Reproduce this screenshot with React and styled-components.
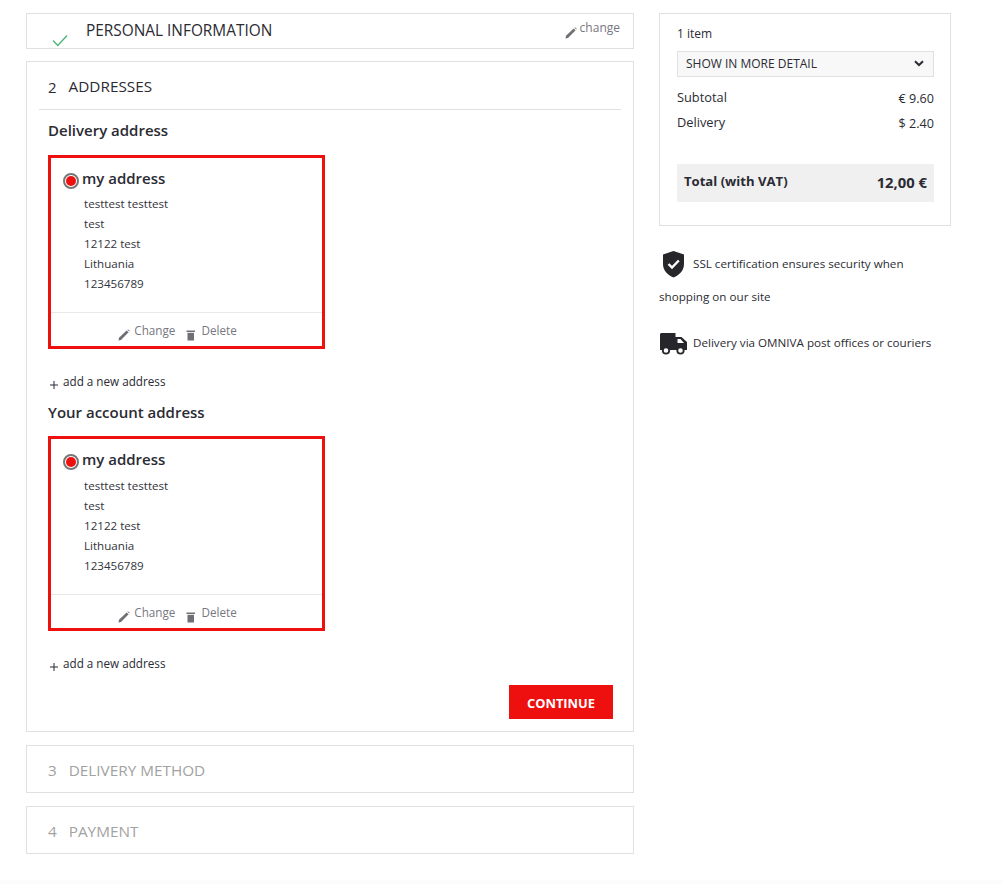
import React from 'react';
import styled, { createGlobalStyle } from 'styled-components';

const Global = createGlobalStyle`
  html, body { margin: 0; padding: 0; background: #fff; }
  body { font-family: "Open Sans", "Liberation Sans", sans-serif; color: #2b2b33; }
`;

const Page = styled.div`
  width: 1003px;
  height: 880px;
  box-sizing: border-box;
  padding: 13px 0 0 26px;
  display: flex;
  gap: 25px;
  align-items: flex-start;
  overflow: hidden;
`;

const FooterEdge = styled.div`
  height: 4px;
  width: 1003px;
  background: #fcfcfc;
`;

const Main = styled.div`
  width: 608px;
  display: flex;
  flex-direction: column;
  gap: 12px;
`;

const Side = styled.div`
  width: 292px;
`;

const Card = styled.section`
  box-sizing: border-box;
  border: 1px solid #e0e0e0;
  background: #fff;
`;

const DoneCard = styled(Card)`
  height: 36px;
  display: flex;
  padding: 0 13px 0 59px;
  justify-content: space-between;
  position: relative;
`;

const Check = styled.svg`
  position: absolute;
  left: 25px;
  top: 20px;
  width: 16px;
  height: 13px;
`;

const DoneTitle = styled.h2`
  margin: 0;
  font-size: 15.4px;
  font-weight: 500;
  line-height: 33px;
`;

const EditLink = styled.a`
  display: flex;
  align-items: flex-start;
  gap: 3px;
  font-size: 12px;
  line-height: 16px;
  color: #77777f;
  padding-top: 6px;
`;

const Pencil = styled.svg`
  width: 12px;
  height: 12px;
  margin-top: 7px;
`;

const OpenCard = styled(Card)`
  height: 671px;
  padding: 0 12px;
  margin-bottom: 1px;
`;

const StepHead = styled.div`
  height: 48px;
  box-sizing: border-box;
  border-bottom: 1px solid #e0e0e0;
  display: flex;
  align-items: center;
  padding: 0 0 0 9px;
  font-size: 15.3px;
  font-weight: 500;
  gap: 12px;
  margin-bottom: 8px;
`;

const StepNum = styled.span`
  font-size: 15px;
  margin-top: 2px;
`;

const MutedCard = styled(Card)`
  height: 48px;
  display: flex;
  align-items: center;
  padding: 2px 0 0 21px;
  gap: 12px;
  font-size: 15.3px;
  font-weight: 500;
  color: #a2a2a2;
  margin-bottom: 1px;
`;

const Content = styled.div`
  padding: 0 9px;
`;

const SectionTitle = styled.h3`
  margin: 0;
  font-size: 15px;
  line-height: 24px;
  font-weight: 600;
`;

const AddressBox = styled.div`
  box-sizing: border-box;
  width: 277px;
  height: ${p => p.$h}px;
  border: 3px solid #ee0f0f;
  margin-top: ${p => p.$top}px;
  display: flex;
  flex-direction: column;
`;

const AddressBody = styled.div`
  flex: 1;
  padding: 8px 0 0 12px;
`;

const NameRow = styled.div`
  display: flex;
  align-items: center;
  gap: 3px;
  font-size: 15px;
  font-weight: 600;
  line-height: 24px;
`;

const Radio = styled.span`
  box-sizing: border-box;
  width: 16px;
  height: 16px;
  border-radius: 50%;
  border: 2px solid #777;
  margin-top: 5px;
  display: flex;
  align-items: center;
  justify-content: center;
  &::after {
    content: '';
    width: 10px;
    height: 10px;
    border-radius: 50%;
    background: #ee0f0f;
  }
`;

const AddressLines = styled.div`
  margin: ${p => p.$first}px 0 0 21px;
`;

const AddressLine = styled.div`
  font-size: 11.6px;
  line-height: 20px;
  color: #33333b;
`;

const AddressActions = styled.div`
  height: 33px;
  border-top: 1px solid #e8e8e8;
  display: flex;
  justify-content: center;
  gap: 10px;
  padding-right: 18px;
  font-size: 11.7px;
  color: #77777f;
  line-height: 16px;
`;

const Action = styled.span`
  display: flex;
  align-items: flex-start;
  gap: ${p => p.$gap}px;
  padding-top: 9px;
`;

const ActionIcon = styled.svg`
  width: 12px;
  height: 12px;
  margin-top: 7px;
`;

const AddLink = styled.div`
  display: flex;
  align-items: flex-start;
  gap: 5px;
  font-size: 11.7px;
  line-height: 16px;
  color: #2b2b33;
  margin: ${p => p.$top}px 0 ${p => p.$bottom}px 2px;
`;

const Plus = styled.svg`
  width: 8px;
  height: 8px;
  margin-top: 8px;
`;

const ButtonRow = styled.div`
  display: flex;
  justify-content: flex-end;
  margin-top: 14px;
`;

const Button = styled.button`
  width: 104px;
  height: 34px;
  margin-right: -1px;
  border: 0;
  background: #ee0f0f;
  color: #fff;
  font-family: inherit;
  font-size: 12.9px;
  font-weight: 700;
  padding: 1px 0 0;
`;

const Summary = styled(Card)`
  height: 213px;
  padding: 11px 16px 0 17px;
`;

const ItemCount = styled.div`
  font-size: 12px;
  line-height: 18px;
`;

const Select = styled.div`
  box-sizing: border-box;
  height: 26px;
  margin-top: 8px;
  border: 1px solid #e0e0e0;
  background: #f8f8f8;
  display: flex;
  align-items: center;
  justify-content: space-between;
  padding: 0 9px 2px 8px;
  font-size: 12px;
`;

const PriceRows = styled.div`
  margin-top: 11px;
`;

const PriceRow = styled.div`
  display: flex;
  justify-content: space-between;
  font-size: 12.8px;
  height: 25px;
  line-height: 18px;
`;

const Amount = styled.span`
  font-size: 12.6px;
  margin-top: 2px;
`;

const Total = styled.div`
  height: 38px;
  margin-top: 26px;
  background: #f0f0f0;
  display: flex;
  justify-content: space-between;
  padding: 0 7px;
  font-weight: 700;
`;

const TotalLabel = styled.span`
  font-size: 13.1px;
  line-height: 34px;
`;

const TotalValue = styled.span`
  font-size: 14.8px;
  line-height: 37px;
`;

const Notes = styled.div`
  font-size: 11.65px;
  color: #2b2b33;
  margin-top: 23px;
`;

const NoteRow = styled.div`
  display: flex;
  align-items: center;
  gap: 5px;
  height: 30px;
  white-space: nowrap;
`;

const NoteText = styled.span`
  margin-top: -2px;
`;

const NoteTail = styled.div`
  line-height: 20px;
  margin: 8px 0 21px;
`;

const PencilIcon = ({ as: Tag = Pencil }) => (
  <Tag viewBox="0 0 12 12">
    <path d="M0.5 11.5 L1 8.8 L8.6 1.4 L10.6 3.3 L3 10.9 Z" fill="#6f6f76" />
    <path d="M9.4 0.7 L10 0.3 L11.8 2 L11.3 2.6 Z" fill="#6f6f76" />
  </Tag>
);

const AddressCard = ({ h, top, first }) => (
  <AddressBox $h={h} $top={top}>
    <AddressBody>
      <NameRow><Radio />my address</NameRow>
      <AddressLines $first={first}>
        <AddressLine>testtest testtest</AddressLine>
        <AddressLine>test</AddressLine>
        <AddressLine>12122 test</AddressLine>
        <AddressLine>Lithuania</AddressLine>
        <AddressLine>123456789</AddressLine>
      </AddressLines>
    </AddressBody>
    <AddressActions>
      <Action $gap={4}><PencilIcon as={ActionIcon} />Change</Action>
      <Action $gap={4}>
        <ActionIcon viewBox="0 0 12 12">
          <path d="M1.5 1.5 H10 V3 H1.5 Z" fill="#6f6f76" />
          <path d="M2.5 3.8 H9 V11.5 H2.5 Z" fill="#6f6f76" />
        </ActionIcon>
        Delete
      </Action>
    </AddressActions>
  </AddressBox>
);

const AddNew = ({ top, bottom }) => (
  <AddLink $top={top} $bottom={bottom}>
    <Plus viewBox="0 0 8 8">
      <path d="M4 0 V8 M0 4 H8" stroke="#2b2b33" strokeWidth="1" fill="none" />
    </Plus>
    add a new address
  </AddLink>
);

export default function App() {
  return (
    <>
      <Global />
      <Page>
        <Main>
          <DoneCard>
            <Check viewBox="0 0 16 13">
              <path d="M1 6.5 L5.8 11.5 L15 1.5" stroke="#4cb877" strokeWidth="1.4" fill="none" />
            </Check>
            <DoneTitle>PERSONAL INFORMATION</DoneTitle>
            <EditLink><PencilIcon />change</EditLink>
          </DoneCard>
          <OpenCard>
            <StepHead><StepNum>2</StepNum>ADDRESSES</StepHead>
            <Content>
              <SectionTitle>Delivery address</SectionTitle>
              <AddressCard h={194} top={13} first={4} />
              <AddNew top={24} bottom={11} />
              <SectionTitle>Your account address</SectionTitle>
              <AddressCard h={195} top={12} first={5} />
              <AddNew top={24} bottom={0} />
              <ButtonRow><Button>CONTINUE</Button></ButtonRow>
            </Content>
          </OpenCard>
          <MutedCard><span>3</span>DELIVERY METHOD</MutedCard>
          <MutedCard><span>4</span>PAYMENT</MutedCard>
        </Main>
        <Side>
          <Summary>
            <ItemCount>1 item</ItemCount>
            <Select>
              SHOW IN MORE DETAIL
              <svg width="10" height="7" viewBox="0 0 10 7">
                <path d="M1 1.2 L5 5 L9 1.2" stroke="#2b2b33" strokeWidth="2" fill="none" />
              </svg>
            </Select>
            <PriceRows>
              <PriceRow>Subtotal<Amount>€ 9.60</Amount></PriceRow>
              <PriceRow>Delivery<Amount>$ 2.40</Amount></PriceRow>
            </PriceRows>
            <Total>
              <TotalLabel>Total (with VAT)</TotalLabel>
              <TotalValue>12,00 €</TotalValue>
            </Total>
          </Summary>
          <Notes>
            <NoteRow>
              <svg width="29" height="28" viewBox="0 0 29 28">
                <path d="M14.5 1 L25 4.5 V14 C25 20.5 20.5 25 14.5 27.5 C8.5 25 4 20.5 4 14 V4.5 Z" fill="#26262b" />
                <path d="M9.5 14 L13 17.5 L19.8 10.5" stroke="#fff" strokeWidth="2.4" fill="none" />
              </svg>
              <NoteText>SSL certification ensures security when</NoteText>
            </NoteRow>
            <NoteTail>shopping on our site</NoteTail>
            <NoteRow>
              <svg width="29" height="24" viewBox="0 0 29 24">
                <path fillRule="evenodd" d="M1 3.5 C1 2.7 1.7 2 2.5 2 H16.5 V6 H22.5 L28 11 V19 H1 Z M18.5 8 V12 H25 L21.5 8 Z" fill="#26262b" />
                <circle cx="7" cy="19.5" r="3.2" fill="#fff" stroke="#26262b" strokeWidth="1.8" />
                <circle cx="21.5" cy="19.5" r="3.2" fill="#fff" stroke="#26262b" strokeWidth="1.8" />
              </svg>
              <NoteText>Delivery via OMNIVA post offices or couriers</NoteText>
            </NoteRow>
          </Notes>
        </Side>
      </Page>
      <FooterEdge />
    </>
  );
}
